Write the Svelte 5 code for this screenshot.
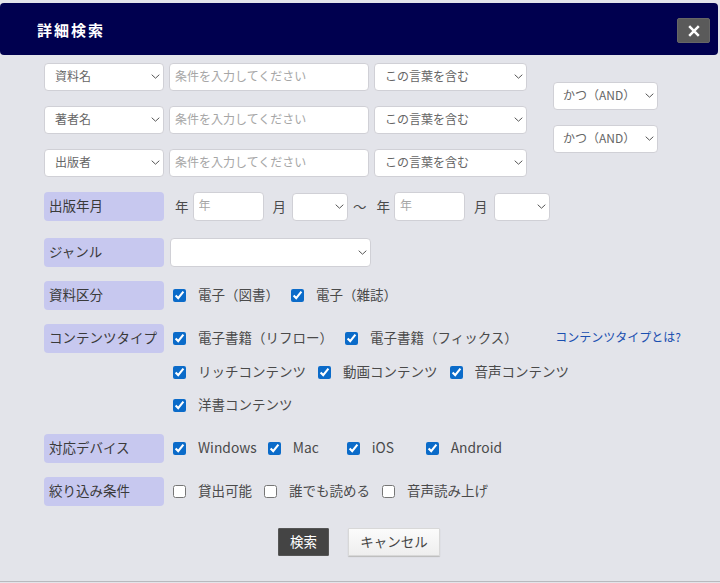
<script>
  const fields = [
    { name: "資料名", join: true },
    { name: "著者名", join: true },
    { name: "出版者", join: false },
  ];
  const contentLines = [
    ["電子書籍（リフロー）", "電子書籍（フィックス）"],
    ["リッチコンテンツ", "動画コンテンツ", "音声コンテンツ"],
    ["洋書コンテンツ"],
  ];
</script>

<div class="modal">
  <header>
    <h1>詳細検索</h1>
    <button class="close" aria-label="閉じる">
      <svg width="12" height="12" viewBox="0 0 12 12">
        <path d="M1.2 1.2l9.6 9.6M10.8 1.2l-9.6 9.6" stroke="#fff" stroke-width="2.5" />
      </svg>
    </button>
  </header>

  <div class="body">
    <div class="cond">
      <div class="fields">
        {#each fields as f}
          <div class="field">
            <select class="target"><option>{f.name}</option></select>
            <input class="word" placeholder="条件を入力してください" />
            <select class="match"><option>この言葉を含む</option></select>
          </div>
        {/each}
      </div>
      <div class="joins">
        {#each fields.filter((f) => f.join) as f}
          <select class="join"><option>かつ（AND）</option></select>
        {/each}
      </div>
    </div>

    <div class="row date-row">
      <div class="label">出版年月</div>
      <div class="date">
        <span>年</span>
        <input class="year" placeholder="年" />
        <span class="month">月</span>
        <select class="mon"><option></option></select>
        <span class="tilde">～</span>
        <span>年</span>
        <input class="year" placeholder="年" />
        <span class="month">月</span>
        <select class="mon"><option></option></select>
      </div>
    </div>

    <div class="row">
      <div class="label">ジャンル</div>
      <select class="genre"><option></option></select>
    </div>

    <div class="row">
      <div class="label">資料区分</div>
      <div class="checks">
        <div class="line">
          <label class="chk"><input type="checkbox" checked /><span>電子（図書）</span></label>
          <label class="chk"><input type="checkbox" checked /><span>電子（雑誌）</span></label>
        </div>
      </div>
    </div>

    <div class="row">
      <div class="label">コンテンツタイプ</div>
      <div class="checks">
        {#each contentLines as line, i}
          <div class="line">
            {#each line as item}
              <label class="chk"><input type="checkbox" checked /><span>{item}</span></label>
            {/each}
            {#if i === 0}
              <span class="help">コンテンツタイプとは?</span>
            {/if}
          </div>
        {/each}
      </div>
    </div>

    <div class="row">
      <div class="label">対応デバイス</div>
      <div class="checks">
        <div class="line devices">
          <label class="chk"><input type="checkbox" checked /><span>Windows</span></label>
          <label class="chk dev"><input type="checkbox" checked /><span>Mac</span></label>
          <label class="chk dev"><input type="checkbox" checked /><span>iOS</span></label>
          <label class="chk"><input type="checkbox" checked /><span>Android</span></label>
        </div>
      </div>
    </div>

    <div class="row">
      <div class="label">絞り込み条件</div>
      <div class="checks">
        <div class="line">
          <label class="chk"><input type="checkbox" /><span>貸出可能</span></label>
          <label class="chk"><input type="checkbox" /><span>誰でも読める</span></label>
          <label class="chk"><input type="checkbox" /><span>音声読み上げ</span></label>
        </div>
      </div>
    </div>

    <div class="buttons">
      <button class="search">検索</button>
      <button class="cancel">キャンセル</button>
    </div>
  </div>
</div>

<style>
  :global(body) {
    background: #e3e4ea;
  }
  .modal {
    height: 582px;
    padding-top: 3px;
    box-sizing: border-box;
    border-bottom: 1px solid #b9b9bd;
    font-family: "Noto Sans CJK JP", "Noto Sans", sans-serif;
    font-size: 13.5px;
    color: #4a4a4a;
  }
  header {
    height: 52px;
    width: 718px;
    box-sizing: border-box;
    padding: 0 8px 0 37px;
    background: #00004f;
    border-radius: 4px;
    display: flex;
    align-items: center;
    justify-content: space-between;
  }
  h1 {
    margin: 0;
    font-size: 15px;
    font-weight: 700;
    letter-spacing: 2px;
    color: #fff;
  }
  .close {
    width: 33px;
    height: 25px;
    margin-top: 3px;
    padding: 0;
    border: 1px solid #666;
    border-radius: 2px;
    background: #5a5a5a;
    display: grid;
    place-items: center;
  }
  .body {
    padding: 8px 0 0 44px;
  }
  select,
  input:not([type="checkbox"]) {
    box-sizing: border-box;
    margin: 0;
    background-color: #fff;
    border: 1px solid #d0d0d6;
    border-radius: 4px;
    font-family: inherit;
    font-size: 12px;
    color: #666;
    outline: none;
  }
  select {
    appearance: none;
    padding: 0 14px 2px 10px;
    background-image: url("data:image/svg+xml,%3Csvg xmlns='http://www.w3.org/2000/svg' width='9' height='5' viewBox='0 0 9 5'%3E%3Cpath d='M.7.7l3.8 3.5L8.3.7' fill='none' stroke='%23555' stroke-width='1'/%3E%3C/svg%3E");
    background-repeat: no-repeat;
    background-position: right 3px center;
  }
  input:not([type="checkbox"]) {
    padding: 0 5px 2px;
  }
  input::placeholder {
    color: #a6a6a6;
    opacity: 1;
  }
  .cond {
    display: flex;
    margin-bottom: 15.5px;
  }
  .fields {
    display: flex;
    flex-direction: column;
    gap: 15.5px;
  }
  .field {
    display: flex;
    gap: 5px;
  }
  .field select,
  .field input {
    height: 27.5px;
  }
  .target {
    width: 120px;
  }
  .word {
    width: 200px;
  }
  .match {
    width: 153px;
  }
  .joins {
    margin: 19px 0 0 26px;
    display: flex;
    flex-direction: column;
    gap: 15.5px;
  }
  .join {
    width: 105px;
    height: 27.5px;
    padding-left: 9px;
  }
  .row {
    display: flex;
    margin-bottom: 14px;
  }
  .date-row {
    margin-bottom: 17px;
  }
  .label {
    flex: none;
    width: 120px;
    height: 29px;
    box-sizing: border-box;
    padding: 0 0 4px 5px;
    display: flex;
    align-items: center;
    background: #c7c8ef;
    border-radius: 4px;
    color: #3a3a3a;
  }
  .date {
    display: flex;
    align-items: center;
    padding-left: 11px;
    height: 29px;
  }
  .date span {
    padding-bottom: 1px;
  }
  .date input {
    width: 71px;
    height: 29px;
    margin-left: 4px;
    padding-bottom: 4px;
  }
  .month {
    margin-left: 9px;
  }
  .mon {
    width: 56px;
    height: 28px;
    margin-left: 6px;
  }
  .tilde {
    margin: 0 10px 0 5px;
  }
  .genre {
    width: 201px;
    height: 29px;
    margin-left: 6px;
  }
  .checks {
    padding-left: 9px;
    flex: 1;
    display: flex;
    flex-direction: column;
    gap: 4.5px;
  }
  .line {
    height: 29px;
    width: 508px;
    display: flex;
    align-items: center;
    gap: 12px;
  }
  .chk {
    display: flex;
    align-items: center;
    white-space: nowrap;
  }
  .chk span {
    padding-bottom: 3px;
  }
  .chk input {
    width: 13px;
    height: 13px;
    margin: 0 12px 0 0;
    accent-color: #0b6bc9;
  }
  .devices {
    gap: 11px;
  }
  .devices span {
    font-size: 13.8px;
  }
  .dev {
    width: 68px;
  }
  .help {
    margin-left: auto;
    margin-top: -4px;
    font-size: 12px;
    color: #1a4fb0;
  }
  .buttons {
    margin-top: 22px;
    padding-left: 234px;
    display: flex;
    gap: 19px;
  }
  .buttons button {
    height: 28px;
    font-family: inherit;
    font-size: 13.5px;
    border-radius: 1px;
  }
  .search {
    width: 51px;
    padding: 0 0 2px;
    background: #444;
    border: 1px solid #555;
    color: #fff;
  }
  .cancel {
    width: 92px;
    padding: 0 0 2px;
    background: linear-gradient(#fbfbfb, #eeeeee);
    border: 1px solid #d8d8d8;
    box-shadow: 0 1px 1px #bbb;
    color: #444;
  }
</style>
